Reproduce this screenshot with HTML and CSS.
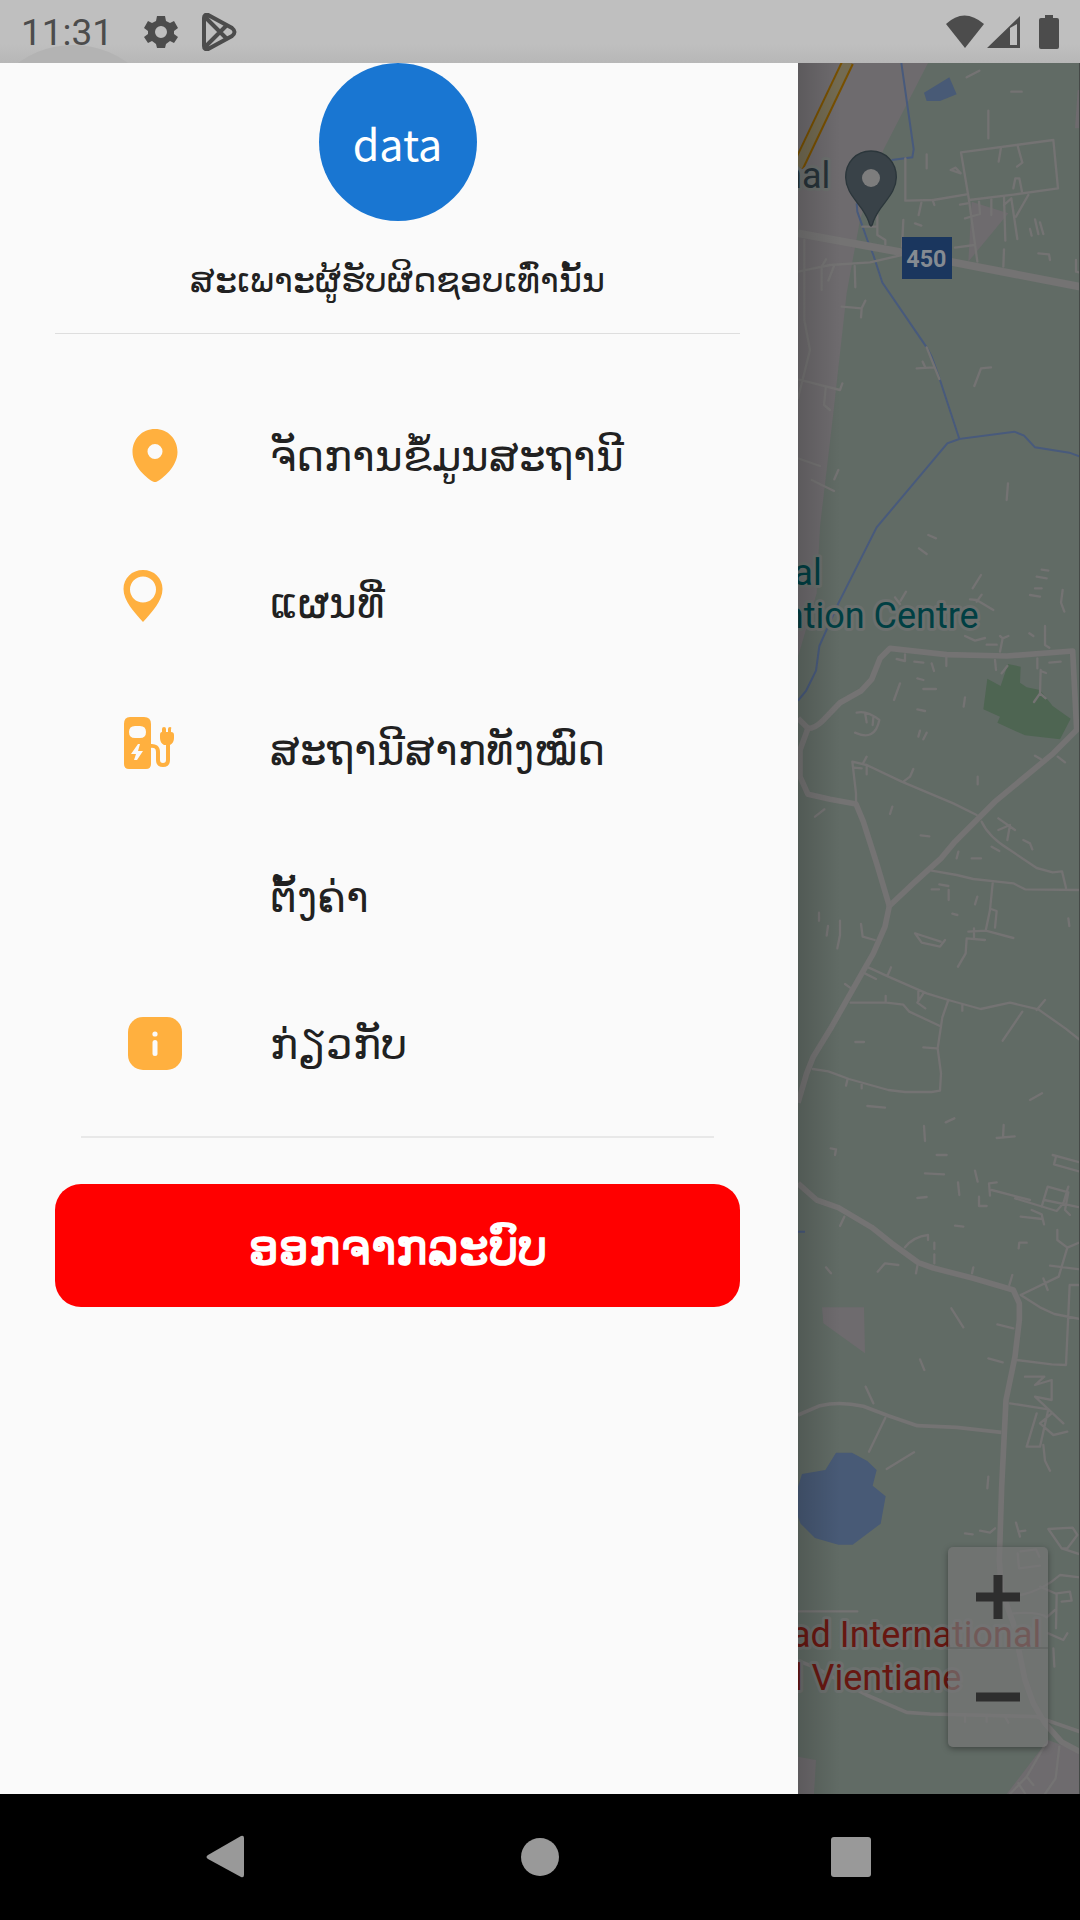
FILE: index.html
```html
<!DOCTYPE html>
<html lang="lo">
<head>
<meta charset="utf-8">
<meta name="viewport" content="width=device-width, initial-scale=1">
<title>data</title>
<link rel="stylesheet" href="styles.css">
</head>
<body>
<header class="status">
  <svg class="status-shade" viewBox="0 0 220 63" aria-hidden="true"><circle cx="73" cy="138" r="93"/></svg>
  <span class="clock">11:31</span>
  <svg class="gear" viewBox="0 0 34 34" aria-hidden="true"><path fill-rule="evenodd" d="M13 1h8l1 5 4 2 4-2 4 7-4 3v3l4 3-4 6-4-2-4 3-1 4h-8l-1-4-4-3-4 2-4-6 4-3v-3l-4-3 4-7 4 2 4-2zM17 11a6 6 0 1 0 0 12a6 6 0 1 0 0-12z"/></svg>
  <svg class="play" viewBox="0 0 36 38" aria-hidden="true"><path d="M3 5v28q0 4 4 3l24-13q5-4 0-8L7 2Q3 1 3 5zM4 4l22 22M4 34l22-22"/></svg>
  <span class="spacer"></span>
  <svg class="wifi" viewBox="0 0 40 34" aria-hidden="true"><path d="M1 9q18-17 38 0L20 33z"/></svg>
  <svg class="signal" viewBox="0 0 34 34" aria-hidden="true"><path fill-rule="evenodd" d="M0 33L33 1v32zM23 13v17h7V9z"/></svg>
  <svg class="battery" viewBox="0 0 20 34" aria-hidden="true"><path d="M6 0h8v3h4q2 0 2 2v27q0 2-2 2H2q-2 0-2-2V5q0-2 2-2h4z"/></svg>
</header>

<main class="screen">
  <aside class="drawer">
    <div class="avatar">data</div>
    <h1 class="role">ສະເພາະຜູ້ຮັບຜິດຊອບເທົ່ານັ້ນ</h1>
    <hr class="rule">
    <nav class="menu">
      <a class="item" href="#stations">
        <svg class="icon" viewBox="0 0 63 63" aria-hidden="true"><path fill-rule="evenodd" d="M32 5C19 5 9.500 15 9.500 28C9.500 43 25 55 30 57.500q2 1 4 0C39 55 54.500 43 54.500 28C54.500 15 45 5 32 5zM32 20a7.500 7.500 0 1 1 0 15a7.500 7.500 0 1 1 0-15z"/></svg>
        <span>ຈັດການຂໍ້ມູນສະຖານີ</span>
      </a>
      <a class="item" href="#map">
        <svg class="icon" viewBox="0 0 63 63" aria-hidden="true"><path fill-rule="evenodd" d="M20 -1C9 -1 .5 7 .5 18C.5 30 11 41 20 51C29 41 39.500 30 39.500 18C39.500 7 31 -1 20 -1zM20 5.500a13 13 0 1 1 0 26a13 13 0 1 1 0-26z"/></svg>
        <span>ແຜນທີ່</span>
      </a>
      <a class="item" href="#all">
        <svg class="icon" viewBox="0 0 63 63" aria-hidden="true"><path fill-rule="evenodd" d="M7-1h14q7 0 7 7v40q0 5-5 5H6q-5 0-5-5V6Q1-1 7-1zM12 8q-6 0-6 6t6 6h5q6 0 6-6t-6-6zM15 26L8 36h5l-2 6h3l6-9h-5l2-7z"/><path d="M39 11q0-2 2-2t2 2v3h2v-3q0-2 2-2t1 2v3q3 0 3 3v3q0 5-4 7h-6q-4-2-4-7v-3q0-3 2-3z"/><path class="cable" d="M27 28q8-1 8 6v8q0 5 5 5t5-5V25"/></svg>
        <span>ສະຖານີສາກທັງໝົດ</span>
      </a>
      <a class="item" href="#settings">
        <span class="icon"></span>
        <span>ຕັ້ງຄ່າ</span>
      </a>
      <a class="item" href="#about">
        <svg class="icon" viewBox="0 0 63 63" aria-hidden="true"><rect x="5" y="5" width="54" height="53" rx="15"/><circle class="mark" cx="32" cy="22" r="2.600"/><rect class="mark" x="29.500" y="28" width="5" height="16" rx="2.500"/></svg>
        <span>ກ່ຽວກັບ</span>
      </a>
    </nav>
    <hr class="rule rule-inset">
    <button class="logout" type="button">ອອກຈາກລະບົບ</button>
  </aside>

  <section class="map" aria-label="Map">
    <svg class="map-art" viewBox="54 9 846 5193" preserveAspectRatio="xMaxYMin slice">
      <g class="land">
        <path d="M54 9H444L310 270L240 480L200 700L160 1060L120 1400L110 1600L54 1790z"/>
        <path d="M575 425L685 460L565 605zM893 90h7v115h-15z"/>
        <path d="M126 3742H252L255 3880L130 3790zM54 5090L108 5100L102 5202H54z"/>
        <path d="M680 5202L804 5040L900 5075V5202z"/>
      </g>
      <path class="park" d="M622 1856L662 1878L684 1812L722 1820L720 1868L740 1882L780 1890L818 1938L872 1976L840 2038L735 2026L652 1988L660 1970L610 1948z"/>
      <g class="lake"><path d="M432 98L508 52L530 103L480 123H440z"/><path d="M54 4280L66 4242L136 4230L168 4178H216L262 4203L290 4230L278 4277L317 4309L302 4391L218 4454H175L105 4434L62 4391L54 4370z"/></g>
      <g class="river">
        <path d="M364 9L401 268L397 292L335 300M230 430L232 455L262 540L280 585L307 668L440 862L455 890L480 960L538 1137L703 1115L732 1127L765 1162L868 1178L900 1190M538 1137L502 1150L290 1402L175 1630L118 1758L108 1832L78 1893L54 1922M54 3515H75"/>
      </g>
      <path class="highway-edge" d="M204 5L54 320"/><path class="highway" d="M204 5L54 320"/>
      <g class="road major">
        <path class="wide" d="M54 520L365 577L520 607L900 680"/>
        <path d="M54 1975L84 2005Q105 2005 128 1982L180 1928L244 1892L275 1858L300 1795L330 1765L500 1784L680 1788L878 1773L890 2010L820 2080L645 2225L600 2270L525 2345L483 2395L400 2470L328 2538L315 2600L280 2680L240 2750L155 2900L100 2990L80 3040L54 3128"/>
        <path d="M84 2005L60 2070L60 2150L84 2203L150 2218L228 2232L250 2285L290 2410L328 2538"/>
        <path d="M54 3370L110 3420L175 3443L275 3502L335 3550L415 3608L460 3624L580 3655L700 3690L718 3730V3780L705 3890L678 4020L665 4280L658 4500L664 4590L700 4690L735 4860L760 4930L795 4990L845 5046L900 5075"/>
      </g>
      <g class="road medium">
        <path d="M54 4065L120 4037Q180 4023 250 4039L325 4067L412 4097L530 4102L664 4117"/>
        <path d="M54 4802L100 4820L260 4905L380 4957L450 4962L770 4970L900 5015"/>
      </g>
      <g class="road minor">
        <path d="M376 295V422L460 420L560 403M543 277L820 240L834 385L700 404L567 420zM567 420L592 605M54 635L150 615L270 607L365 585M73 540V780L90 870L54 1015M54 958L180 990L187 970M137 985L132 1035L150 1050M185 740L245 745L256 722M245 745L243 772M440 862L478 957M410 925L462 922M428 905L435 920M583 978L603 925L633 922M54 1195L120 1218M95 1260L162 1293M175 1230L163 1258M684 1270L680 1320"/>
        <path d="M292 465V525L316 540V553M247 500H292M125 690V620L138 598M162 618L145 662M224 618L226 682M370 480L366 560M440 283V325M625 152V235M560 52L598 32M694 95H725M663 263L656 305M713 258L727 308L711 320M512 330L542 340L527 323zM424 428L416 465M458 420L463 435M405 490L424 497M540 434L563 430M555 475L600 462L597 425M700 385L706 355H718L726 395M672 410L676 542M694 415L712 537M745 405L708 470M672 435L694 415M634 418V465M672 568L670 620M765 478L775 522M780 487L790 522M750 507L755 527M775 580L807 583L810 600M525 563L583 555M888 600V635L900 638"/>
        <path d="M445 1425L468 1435M417 1465L440 1482M603 1545L578 1585M785 1529L805 1532M770 1550L800 1555M765 1585H785M750 1605L780 1610M848 1590L843 1628L853 1655M570 1618L590 1620L640 1650M605 1604L590 1625M378 1595L362 1622M345 1612L360 1632M555 1728L585 1742L615 1734M620 1754H650M660 1728L668 1735L660 1775M668 1735L685 1728M795 1698V1755L808 1763M748 1720L760 1728M350 1797L375 1803V1783M403 1805L430 1808M455 1810L462 1833M499 1792V1818M645 1800L648 1830M682 1818L665 1840M772 1795V1825M808 1808L842 1805M782 1830L780 1900L762 1926M780 1900L797 1915M782 1833L798 1839M360 1870L342 1920M430 1887H468M555 1912L551 1940M412 1855L430 1860M412 1948L435 1953M420 2012L415 2030M440 2018L430 2038"/>
        <path d="M230 1958Q260 1950 298 1980Q285 2045 225 2018M255 1958L260 1987M280 1972L278 1995M228 2232V2200L217 2105L260 2115L365 2165L520 2230L590 2265M222 2123L245 2125M260 2090L248 2112M260 2115V2143M400 2127L390 2150L370 2165M605 2285Q625 2330 690 2370L770 2424L818 2437L846 2434L858 2483M455 2432L530 2445L580 2457L700 2470L735 2488L900 2490M638 2470L630 2550L617 2612L700 2634M633 2547L650 2553L645 2603M565 2615L617 2612M560 2635L615 2640M560 2635L557 2680L534 2720M582 2605V2633M405 2620L425 2648L480 2660L495 2640M405 2620L430 2628L482 2645M455 2488H477M478 2473L505 2478M506 2490V2520M592 2510L585 2533M517 2561L532 2565M575 2395H603M535 2375L530 2395M422 2326L448 2329M593 2150V2173M765 2087L783 2098M833 2090L855 2107M655 2275L705 2310M655 2310L690 2295L682 2340M730 2340L750 2350L757 2368M635 2360L658 2373M105 2270L133 2248M337 2240L330 2262M117 2558V2582M144 2598L140 2627M180 2582V2625L172 2665M243 2592L248 2630L284 2640M865 2575L868 2598"/>
        <path d="M265 2722L325 2750L440 2800L505 2820L602 2847L690 2828L775 2848L857 2906L900 2940M212 2828H320L370 2834L388 2855L480 2898M505 2820L487 2872L473 2965L483 3040L480 3092L455 3096H375L325 3090L207 3057L145 3034L98 3027M430 2962L470 2965M333 2722L322 2748M250 2738L288 2757M195 2772L210 2783M317 2808V2825M415 2790V2820M430 2800L412 2828L436 2845M795 2820L770 2850M727 2855L668 2942M547 2835V2852M226 2946H252M202 3060L198 3077M245 3068V3085M262 3138L315 3143M432 3198L435 3243M497 3187L523 3175M470 3285H500M435 3340L492 3343M412 3414L440 3411M534 3367L538 3405M585 3332L593 3365M650 3234L704 3229M671 3195L669 3232M597 3410V3438H620M750 3120L786 3100M525 3497L550 3500M152 3265L168 3268L165 3285M630 3407L627 3370L650 3367M635 3390L750 3420M705 3415L830 3453L850 3430L865 3380M785 3440L803 3380L865 3397L855 3450L870 3465M755 3450L785 3463L792 3493M722 3470L787 3477M793 3420L900 3442"/>
        <path d="M818 3285L900 3307M828 3290L822 3313L900 3335M375 3562Q400 3530 444 3525V3540M463 3548V3567M463 3583V3610M293 3635L315 3610L355 3615M193 3470L180 3498M138 3622L153 3640M412 3618L408 3640M580 3622L576 3640M716 3565L718 3548H740M722 3705L836 3650L862 3563L900 3547M862 3563L832 3540V3510M810 3617L900 3628M722 3705L780 3742L823 3762L900 3777M900 3675H869L858 3915L815 3913L710 3900M514 3745L550 3802M420 3898L433 3930M257 3980L280 4030M652 3793L700 3805M625 3895L668 3907M790 3655L803 3690M697 3645L688 3675M735 3950H793L765 3975L815 3960V4020L765 4010L850 4090"/>
        <path d="M316 4073L267 4175M320 4227L402 4177M625 4250L622 4285M690 4030L805 4048L780 4160H740L770 4060M815 4060L780 4090L820 4125L862 4115M790 4155L795 4202L810 4232M555 4420L578 4423M600 4412L630 4418L645 4405M708 4388L720 4430M736 4412L715 4415M54 4654H232M805 4407L878 4403L892 4425L862 4465L845 4465zM845 4465L900 4483M723 4605Q790 4590 840 4545L900 4552M780 4580L830 4602L828 4705M830 4600L870 4595L875 4622L845 4625M700 4660Q780 4655 800 4672L825 4650M805 4720L850 4740L862 4720M820 4765L823 4820M722 4474L768 4468L778 4490M713 4480L717 4525L780 4517M555 4970V4985M620 4970V4985M675 4970L685 4988M838 5060L827 5155L795 5202M795 5055L740 5150L690 5202M740 5150L760 5175M715 5170L735 5200"/>
      </g>
      <g class="label town"><text x="151" y="383" text-anchor="end">nal</text></g>
      <g class="label venue"><text x="125" y="1574" text-anchor="end">al</text><text x="596" y="1704" text-anchor="end">ntion Centre</text></g>
      <g class="label hotel"><text x="784" y="4761" text-anchor="end">ad International</text><text x="544" y="4891" text-anchor="end">l Vientiane</text></g>
      <path class="pin" d="M273 273C229 273 197 307 197 352C197 390 224 416 245 446C260 468 266 482 269 494Q273 502 277 494C280 482 286 468 301 446C322 416 349 390 349 352C349 307 317 273 273 273z"/>
      <circle class="pin-dot" cx="273" cy="354" r="27"/>
      <rect class="shield" x="366" y="531" width="150" height="126"/>
      <text class="shield-text" x="439" y="622" text-anchor="middle">450</text>
    </svg>
    <div class="zoom">
      <button type="button" aria-label="Zoom in"><svg viewBox="0 0 44 44"><path d="M0 22H44M22 0V44"/></svg></button>
      <button type="button" aria-label="Zoom out"><svg viewBox="0 0 44 44"><path d="M0 22H44"/></svg></button>
    </div>
  </section>
</main>

<footer class="system-nav">
  <button type="button" aria-label="Back"><svg viewBox="0 0 63 63"><path d="M12 29L45 10q3-1 3 2v37q0 3-3 2L12 33q-3-2 0-4z"/></svg></button>
  <button type="button" aria-label="Home"><svg viewBox="0 0 63 63"><circle cx="31" cy="31" r="19"/></svg></button>
  <button type="button" aria-label="Recent apps"><svg viewBox="0 0 63 63"><rect x="9" y="11" width="40" height="40" rx="3"/></svg></button>
</footer>
</body>
</html>
```
FILE: styles.css
```css
* { box-sizing: border-box; }

body {
  margin: 0;
  min-height: 100vh;
  display: flex;
  flex-direction: column;
  background: #000;
  color: #212121;
  font-family: "Noto Sans CJK SC", "Noto Sans", sans-serif;
}

button { border: 0; padding: 0; font: inherit; color: inherit; }
svg { display: block; }

/* Status bar */
.status {
  position: relative;
  height: 63px;
  display: flex;
  align-items: center;
  padding: 0 21px;
  background: linear-gradient(#bfbfbf 70%, #b7b7b7);
  color: #4c4c4c;
  font: 37px/42px Roboto, sans-serif;
}
.status svg { fill: #4c4c4c; flex: none; }
.status .status-shade {
  position: absolute;
  left: 0;
  top: 0;
  width: 220px;
  height: 63px;
  fill: #b3b3b3;
}
.clock { position: relative; padding-top: 3px; margin-right: 31px; }
.gear { width: 34px; height: 34px; margin-right: 23px; }
.status .play { width: 36px; height: 38px; fill: none; stroke: #4c4c4c; stroke-width: 4; }
.spacer { flex: 1; }
.wifi { width: 40px; height: 34px; margin-right: 2px; }
.signal { width: 34px; height: 34px; margin-right: 18px; }
.battery { width: 20px; height: 34px; }

/* Drawer and map */
.screen {
  flex: 1;
  display: grid;
  grid-template-columns: 133fr 47fr;
}
.drawer {
  display: flex;
  flex-direction: column;
  align-items: stretch;
  padding: 0 58px 0 55px;
  background: #fafafa;
}
.avatar {
  align-self: center;
  width: 158px;
  height: 158px;
  border-radius: 50%;
  display: flex;
  align-items: center;
  justify-content: center;
  background: #1976d2;
  color: #fff;
  font-size: 43px;
}
.role {
  margin: 28px 0 0;
  font-size: 35px;
  line-height: 56px;
  font-weight: 400;
  text-align: center;
}
.rule {
  width: 100%;
  height: 1px;
  margin: 28px 0 0;
  border: 0;
  background: #dedede;
}
.menu { margin-top: 48px; padding-left: 68px; }
.item {
  height: 147px;
  display: flex;
  align-items: center;
  gap: 84px;
  color: inherit;
  font-size: 42px;
  line-height: 68px;
  text-decoration: none;
}
.item span { padding-bottom: 6px; }
.icon { flex: none; width: 63px; height: 63px; fill: #ffb03f; overflow: visible; }
.icon .cable { fill: none; stroke: #ffb03f; stroke-width: 4; }
.icon .mark { fill: #fafafa; }
.rule-inset { width: auto; height: 2px; margin: 19px 26px 0; background: #e8e8e8; }
.logout {
  height: 123px;
  margin-top: 46px;
  padding-bottom: 4px;
  border-radius: 26px;
  background: #f00;
  color: #fff;
  font-size: 47px;
  font-weight: 700;
}

/* Map, dimmed behind the drawer */
.map { position: relative; overflow: hidden; background: #616b65; }
.map::after {
  content: "";
  position: absolute;
  inset: 0;
  background: linear-gradient(90deg, rgba(0, 0, 0, 0.16), transparent 42px);
  border-right: 1px solid #454947;
  pointer-events: none;
}
.map-art { position: absolute; inset: 0; width: 100%; height: 100%; }
.land { fill: #6e6b6e; }
.park { fill: #4e6552; }
.lake { fill: #485a76; }
.river { fill: none; stroke: #485a7c; stroke-width: 6; }
.highway-edge { stroke: #785000; stroke-width: 38; }
.highway { stroke: #736b52; stroke-width: 26; }
.road { fill: none; stroke: #747373; stroke-linejoin: round; }
.major { stroke-width: 17; }
.major .wide { stroke-width: 23; }
.medium { stroke-width: 11; }
.minor { stroke-width: 7; stroke-linecap: round; }
.label {
  font: 108px Roboto, sans-serif;
  stroke: #6c706e;
  stroke-width: 18;
  stroke-linejoin: round;
  paint-order: stroke;
}
.town { fill: #263238; }
.venue { fill: #003f43; }
.hotel { fill: #671711; }
.pin { fill: #394248; stroke: #2b363b; stroke-width: 4; }
.pin-dot { fill: #7d7d7d; }
.shield { fill: #1a365e; }
.shield-text { fill: #858b92; font: 700 70px Roboto, sans-serif; }

.zoom {
  position: absolute;
  right: 32px;
  bottom: 47px;
  width: 100px;
  border-radius: 5px;
  overflow: hidden;
  background: rgba(118, 118, 118, 0.7);
  box-shadow: 0 2px 6px rgba(0, 0, 0, 0.35);
}
.zoom button {
  width: 100px;
  height: 100px;
  display: grid;
  place-items: center;
  background: none;
}
.zoom button + button { box-shadow: inset 0 2px #666967; }
.zoom svg { width: 44px; height: 44px; stroke: #2e2e2e; stroke-width: 9; }

/* System navigation */
.system-nav {
  height: 126px;
  display: flex;
  align-items: center;
  justify-content: center;
  gap: 250px;
  background: #000;
}
.system-nav button { width: 63px; height: 63px; background: none; }
.system-nav svg { fill: #999; }
```
